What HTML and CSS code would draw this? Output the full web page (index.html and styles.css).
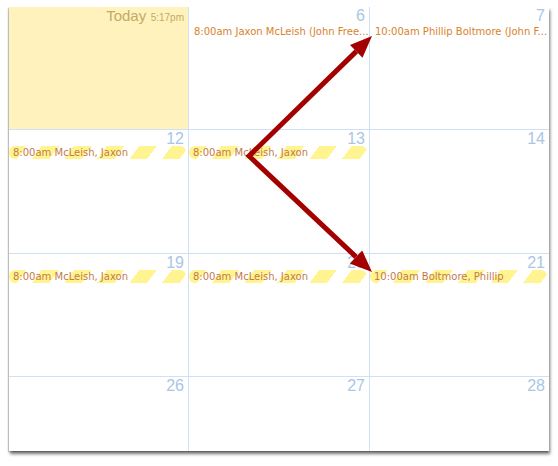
FILE: index.html
```html
<!DOCTYPE html>
<html>
<head>
<meta charset="utf-8">
<link rel="stylesheet" href="styles.css">
</head>
<body>
<div class="stage">
  <div class="calendar">
    <div class="cell today">
      <div class="head"><span class="today-label">Today</span> <span class="time">5:17pm</span></div>
    </div>
    <div class="cell">
      <div class="head"><span class="num">6</span></div>
      <div class="event">8:00am Jaxon McLeish (John Free...</div>
    </div>
    <div class="cell">
      <div class="head"><span class="num">7</span></div>
      <div class="event">10:00am Phillip Boltmore (John F...</div>
    </div>

    <div class="cell">
      <div class="head"><span class="num">12</span></div>
      <div class="bar">8:00am McLeish, Jaxon</div>
    </div>
    <div class="cell">
      <div class="head"><span class="num">13</span></div>
      <div class="bar">8:00am McLeish, Jaxon</div>
    </div>
    <div class="cell">
      <div class="head"><span class="num">14</span></div>
    </div>

    <div class="cell">
      <div class="head"><span class="num">19</span></div>
      <div class="bar">8:00am McLeish, Jaxon</div>
    </div>
    <div class="cell">
      <div class="head"><span class="num">20</span></div>
      <div class="bar">8:00am McLeish, Jaxon</div>
    </div>
    <div class="cell">
      <div class="head"><span class="num">21</span></div>
      <div class="bar">10:00am Boltmore, Phillip</div>
    </div>

    <div class="cell">
      <div class="head"><span class="num">26</span></div>
    </div>
    <div class="cell">
      <div class="head"><span class="num">27</span></div>
    </div>
    <div class="cell">
      <div class="head"><span class="num">28</span></div>
    </div>
  </div>

  <svg class="arrows" width="558" height="466" viewBox="0 0 558 466">
    <polyline points="356.3,51.4 249,156 356,256.9" fill="none" stroke="#a30000" stroke-width="5" stroke-linejoin="miter" stroke-miterlimit="10"/>
    <polygon points="372,36 362.5,57.8 350,44.9" fill="#a30000"/>
    <polygon points="372,272 349.8,263.4 362.2,250.4" fill="#a30000"/>
  </svg>
</div>
</body>
</html>
```

FILE: styles.css
```css
html, body {
  margin: 0;
  padding: 0;
  background: #ffffff;
}

.stage {
  position: relative;
  width: 558px;
  height: 466px;
  overflow: hidden;
}

.calendar {
  margin: 7px 0 0 9px;
  width: 540px;
  display: grid;
  grid-template-columns: 179px 180px 179px;
  grid-template-rows: 122px 123px 122px 74px;
  gap: 1px;
  background: #cfe0f7;
  box-shadow: 1px 3px 3px rgba(0, 0, 0, 0.55), -1px 1px 1px rgba(0, 0, 0, 0.18);
}

.cell {
  background: #ffffff;
  min-width: 0;
  overflow: hidden;
}

.cell.today {
  background: #fff2bd;
}

.head {
  height: 17px;
  padding: 0 4px 0 4px;
  text-align: right;
  font-family: "Liberation Sans", Arial, sans-serif;
  line-height: 17px;
  white-space: nowrap;
}

.num {
  font-size: 16px;
  color: #a9c6e6;
}

.today-label {
  font-size: 15px;
  color: #c2ab66;
}

.time {
  font-size: 10px;
  color: #c2ab66;
}

.event {
  padding: 1px 4px 0 5px;
  font-family: "DejaVu Sans", Verdana, sans-serif;
  font-size: 10px;
  line-height: 14px;
  color: #d9822b;
  white-space: nowrap;
  overflow: hidden;
}

.bar {
  margin: -1px 2px 0 0;
  height: 13px;
  padding: 0 4px;
  border-radius: 6px;
  font-family: "DejaVu Sans", Verdana, sans-serif;
  font-size: 10px;
  line-height: 14px;
  color: #c47a4c;
  white-space: nowrap;
  overflow: hidden;
  background: repeating-linear-gradient(127deg, #fff48f 0 14px, rgba(255, 244, 143, 0) 14px 26px);
}

.arrows {
  position: absolute;
  top: 0;
  left: 0;
  pointer-events: none;
}
```
